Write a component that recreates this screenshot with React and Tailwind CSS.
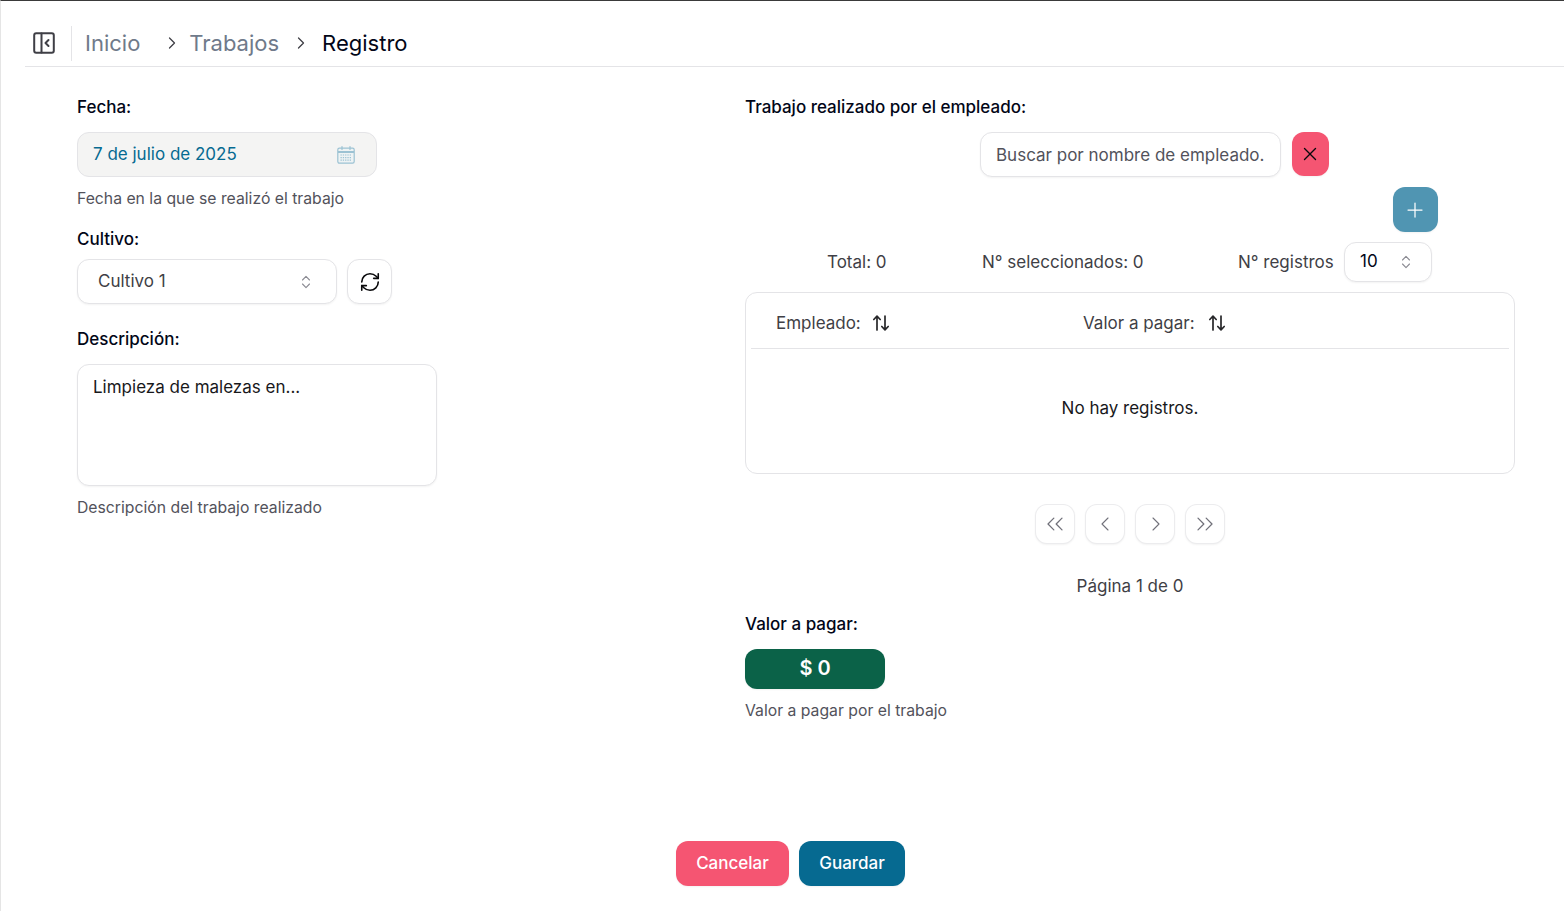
import React from "react";
import { ChevronRight, ChevronLeft, ChevronsLeft, ChevronsRight, RefreshCw, X, Plus } from "lucide-react";

function Label({ children }) {
  return <div className="h-6 text-[17px] leading-6 font-medium text-[#020617]">{children}</div>;
}

function Selector({ children, className }) {
  return (
    <div className={"flex items-center justify-between bg-white border border-[#e4e4e7] rounded-xl shadow-xs text-[#020617] " + className}>
      {children}
    </div>
  );
}

function UpDown() {
  return (
    <svg width="16" height="16" viewBox="0 0 16 16" fill="none" stroke="#8b8b93" strokeWidth="1.1" strokeLinecap="round" strokeLinejoin="round">
      <path d="M4.5 6 8 2.3 11.5 6" />
      <path d="M4.5 10 8 13.7 11.5 10" />
    </svg>
  );
}

function CalendarIcon() {
  return (
    <svg width="20" height="20" viewBox="0 0 20 20" fill="none" stroke="#9cc2d3" strokeWidth="1.2">
      <rect x="1.8" y="3.2" width="16.4" height="15" rx="1.6" fill="#eef3f4" />
      <path d="M2 7h16" strokeWidth="2" />
      <path d="M6 1.5v3M14 1.5v3" strokeLinecap="round" />
      <path d="M4.5 10h11M4.5 12.6h11M4.5 15.2h11" strokeDasharray="1.3 1" />
    </svg>
  );
}

function Pager({ icon: Icon, size, shift }) {
  return (
    <div className="size-10 flex items-center justify-center rounded-xl border border-[#e4e4e7]/70 shadow-xs bg-white">
      <Icon size={size} strokeWidth={1.1} className={"text-[#71717a] " + (shift || "")} />
    </div>
  );
}

function SortHead({ label, className, gap }) {
  return (
    <div className={"flex items-center text-[#3f3f46] " + className}>
      <span>{label}</span>
      <svg width="20" height="20" viewBox="0 0 20 20" fill="none" stroke="#27272a" strokeWidth="1.7" strokeLinecap="round" strokeLinejoin="round" className={"-mt-[2px] " + gap}>
        <path d="M6 17V3.5M2.8 6.5 6 3.2l3.2 3.3" />
        <path d="M14 3v13.5M10.8 13.5l3.2 3.3 3.2-3.3" />
      </svg>
    </div>
  );
}

function PanelIcon() {
  return (
    <svg width="22" height="22" viewBox="0 0 22 22" fill="none" stroke="#3f3f46" strokeWidth="2" strokeLinecap="round" strokeLinejoin="round" className="ml-[8px]">
      <rect x="1.2" y="1.2" width="19.6" height="19.6" rx="2" />
      <path d="M8.5 1.5v19" />
      <path d="M15.5 8 12.5 11l3 3" />
    </svg>
  );
}

export default function App() {
  return (
    <div className="h-[911px] overflow-hidden bg-white border-t border-t-[#3a3a3a] border-l border-l-[#e5e5e5] flex flex-col text-[17px] text-[#3f3f46] font-['Inter','Liberation_Sans',sans-serif]">
      <header className="ml-6 h-[66px] shrink-0 flex items-center border-b border-[#e4e4e7]">
        <div className="flex items-center h-[34px] mt-[19px]">
          <PanelIcon />
          <div className="w-px h-[35px] bg-[#e4e4e7] ml-[16px] mr-[13px]" />
          <nav className="flex items-center text-[22px] leading-7 text-[#6f7a8a]">
            <span>Inicio</span>
            <ChevronRight size={20} strokeWidth={1.5} className="ml-[22px] mr-[7px] text-[#3f3f46]" />
            <span>Trabajos</span>
            <ChevronRight size={20} strokeWidth={1.5} className="ml-[12px] mr-[11px] text-[#3f3f46]" />
            <span className="text-[#020617]">Registro</span>
          </nav>
        </div>
      </header>

      <main className="flex-1 flex flex-col pl-[76px] pr-[49px] pt-[28px]">
        <div className="flex">
          <section className="w-[668px] shrink-0">
            <Label>Fecha:</Label>
            <div className="mt-[13px] w-[300px] h-[45px] flex items-center justify-between pl-[15px] pr-5 bg-[#f4f4f3] border border-[#e4e4e7] rounded-xl text-[#066a91] ">
              <span>7 de julio de 2025</span>
              <CalendarIcon />
            </div>
            <p className="mt-[12px] text-[15.75px] leading-5 text-[#52525b]">Fecha en la que se realizó el trabajo</p>

            <div className="mt-[18px]"><Label>Cultivo:</Label></div>
            <div className="mt-[8px] flex gap-[10px]">
              <Selector className="w-[260px] h-[45px] pl-5 pr-[22px]">
                <span className="text-[#3f3f46]">Cultivo 1</span>
                <UpDown />
              </Selector>
              <div className="size-[45px] flex items-center justify-center bg-white border border-[#e4e4e7] rounded-xl shadow-xs">
                <RefreshCw size={22} strokeWidth={1.75} className="text-[#09090b]" />
              </div>
            </div>

            <div className="mt-[23px]"><Label>Descripción:</Label></div>
            <div className="mt-[13px] w-[360px] h-[122px] bg-white border border-[#e4e4e7] rounded-xl shadow-xs px-[15px] py-[10px] text-[#18181b]">
              Limpieza de malezas en...
            </div>
            <p className="mt-[12px] text-[15.75px] leading-5 text-[#52525b]">Descripción del trabajo realizado</p>
          </section>

          <section className="flex-1 min-w-0">
            <Label>Trabajo realizado por el empleado:</Label>
            <div className="mt-[13px] flex justify-center gap-[11px] pl-[49px]">
              <div className="h-[45px] w-[301px] flex items-center pl-[15px] pt-[2px] bg-white border border-[#e4e4e7] rounded-xl shadow-xs text-[#52525b]">
                Buscar por nombre de empleado.
              </div>
              <div className="h-[44px] w-[37px] flex items-center justify-center pr-[2px] rounded-xl bg-[#f55572] shadow-xs">
                <X size={22} strokeWidth={1.5} className="text-[#09090b]" />
              </div>
            </div>
            <div className="mt-[10px] flex justify-end pr-[77px]">
              <div className="size-[45px] flex items-center justify-center pr-[2px] rounded-xl bg-[#5095b2] shadow-xs">
                <Plus size={24} strokeWidth={1.25} className="text-white" />
              </div>
            </div>
            <div className="mt-[10px] flex items-center h-10 text-[#3f3f46]">
              <span className="ml-[82px] w-[155px] pt-[2px]">Total: 0</span>
              <span className="w-[256px] pt-[2px]">N° seleccionados: 0</span>
              <span className="w-[106px] pt-[2px]">N° registros</span>
              <Selector className="w-[88px] h-10 pl-[15px] pr-[17px] text-[#18181b]">
                <span>10</span>
                <UpDown />
              </Selector>
            </div>

            <div className="mt-[10px] h-[182px] border border-[#e4e4e7] rounded-xl px-[5px] pt-[5px]">
              <div className="h-[51px] flex items-center border-b border-[#e4e4e7] pl-[25px] pt-[1px]">
                <SortHead label="Empleado:" className="w-[307px]" gap="ml-[10px]" />
                <SortHead label="Valor a pagar:" gap="ml-[12px]" />
              </div>
              <div className="h-[118px] flex items-center justify-center pt-[2px] text-[#18181b]">No hay registros.</div>
            </div>

            <div className="mt-[30px] flex justify-center gap-[10px]">
              <Pager icon={ChevronsLeft} size={28} />
              <Pager icon={ChevronLeft} size={24} shift="-ml-[1px]" />
              <Pager icon={ChevronRight} size={24} shift="ml-[1px]" />
              <Pager icon={ChevronsRight} size={28} />
            </div>
            <div className="mt-[30px] text-center h-6 leading-6">Página 1 de 0</div>

            <div className="mt-[14px]"><Label>Valor a pagar:</Label></div>
            <div className="mt-[13px] w-[140px] h-10 flex items-center justify-center rounded-xl bg-[#0b6248] text-white text-xl font-semibold shadow-xs">
              <span className="-mt-[2px]">$ 0</span>
            </div>
            <p className="mt-[12px] text-[15.75px] leading-5 text-[#52525b]">Valor a pagar por el trabajo</p>
          </section>
        </div>

        <div className="mt-[120px] flex justify-center gap-[10px] pr-[11px] font-medium text-white">
          <div className="h-[45px] w-[113px] flex items-center justify-center rounded-xl bg-[#f55572] shadow-xs">Cancelar</div>
          <div className="h-[45px] w-[106px] flex items-center justify-center rounded-xl bg-[#066a91] shadow-xs">Guardar</div>
        </div>
      </main>
    </div>
  );
}
